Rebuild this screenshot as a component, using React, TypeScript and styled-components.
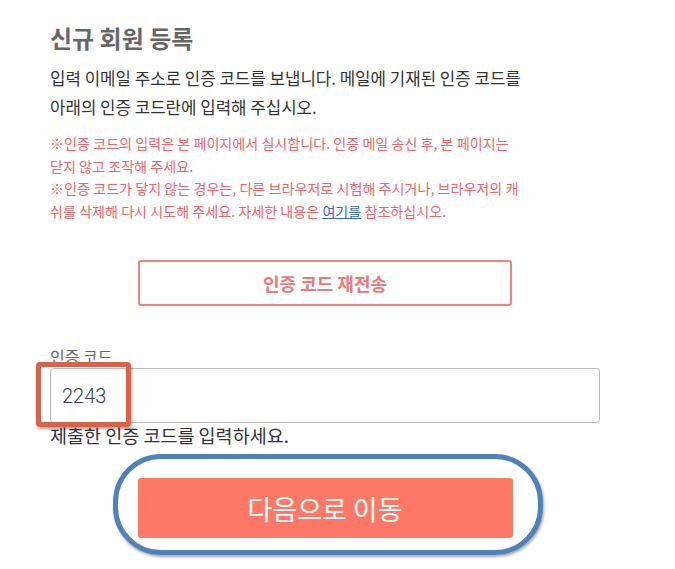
import React from "react";
import styled, { createGlobalStyle } from "styled-components";

const GlobalStyle = createGlobalStyle`
  html, body {
    margin: 0;
    padding: 0;
    background: #fff;
  }
  body {
    font-family: "Noto Sans CJK KR", "Noto Sans", sans-serif;
  }
`;

const Page = styled.div`
  width: 550px;
  padding: 20px 0 40px 50px;
  display: flex;
  flex-direction: column;
`;

const Title = styled.h2`
  margin: 0;
  font-size: 24px;
  font-weight: 700;
  line-height: 36px;
  color: #666;
`;

const Lead = styled.p`
  margin: 8px 0 0;
  font-size: 16.8px;
  line-height: 29px;
  color: #333;
`;

const Notice = styled.p`
  margin: 10px 0 0;
  font-size: 14.1px;
  line-height: 22.5px;
  color: #f2646a;

  a {
    color: #3366bb;
    text-decoration: underline;
  }
`;

const Centered = styled.div`
  display: flex;
  justify-content: center;
  position: relative;
`;

const ResendButton = styled.button`
  margin-top: 38px;
  width: 374px;
  height: 46px;
  border: 2px solid #f08282;
  border-radius: 3px;
  background: #fff;
  color: #f07878;
  font-family: inherit;
  font-size: 18px;
  font-weight: 700;
  cursor: pointer;
`;

const Field = styled.div`
  margin-top: 38px;
  display: flex;
  flex-direction: column;
  position: relative;
`;

const FieldLabel = styled.label`
  font-size: 16px;
  line-height: 24px;
  color: #666;
`;

const Input = styled.input`
  box-sizing: border-box;
  width: 550px;
  height: 55px;
  border: 1px solid #bbb;
  border-radius: 4px;
  padding: 0 11px;
  font-family: "Roboto", "Noto Sans", sans-serif;
  font-size: 20px;
  font-weight: 300;
  color: #3a3d50;
  outline: none;
`;

const Help = styled.div`
  font-size: 18.5px;
  line-height: 24px;
  color: #333;
`;

const Highlight = styled.div<{ $color: string; $radius: number }>`
  position: absolute;
  border: 5px solid ${(p) => p.$color};
  border-radius: ${(p) => p.$radius}px;
  box-shadow: 1px 2px 3px rgba(0, 0, 0, 0.35);
  pointer-events: none;
`;

const CodeMark = styled(Highlight)`
  left: -14px;
  top: 18px;
  width: 85px;
  height: 55px;
`;

const NextWrap = styled(Centered)`
  margin-top: 31px;
`;

const NextButton = styled.button`
  width: 375px;
  height: 60px;
  border: none;
  border-radius: 3px;
  background: #fe7867;
  color: #fff;
  font-family: inherit;
  font-size: 27px;
  cursor: pointer;
`;

const NextMark = styled(Highlight)`
  left: 63px;
  top: -24px;
  width: 420px;
  height: 91px;
`;

export default function App() {
  return (
    <>
      <GlobalStyle />
      <Page>
        <Title>신규 회원 등록</Title>
        <Lead>
          입력 이메일 주소로 인증 코드를 보냅니다. 메일에 기재된 인증 코드를
          <br />
          아래의 인증 코드란에 입력해 주십시오.
        </Lead>
        <Notice>
          ※인증 코드의 입력은 본 페이지에서 실시합니다. 인증 메일 송신 후, 본 페이지는
          <br />
          닫지 않고 조작해 주세요.
          <br />
          ※인증 코드가 닿지 않는 경우는, 다른 브라우저로 시험해 주시거나, 브라우저의 캐
          <br />
          쉬를 삭제해 다시 시도해 주세요. 자세한 내용은 <a href="#">여기를</a> 참조하십시오.
        </Notice>
        <Centered>
          <ResendButton>인증 코드 재전송</ResendButton>
        </Centered>
        <Field>
          <FieldLabel>인증 코드</FieldLabel>
          <Input defaultValue="2243" />
          <Help>제출한 인증 코드를 입력하세요.</Help>
          <CodeMark $color="#d9634a" $radius={4} />
        </Field>
        <NextWrap>
          <NextButton>다음으로 이동</NextButton>
          <NextMark $color="#4f81bb" $radius={48} />
        </NextWrap>
      </Page>
    </>
  );
}
